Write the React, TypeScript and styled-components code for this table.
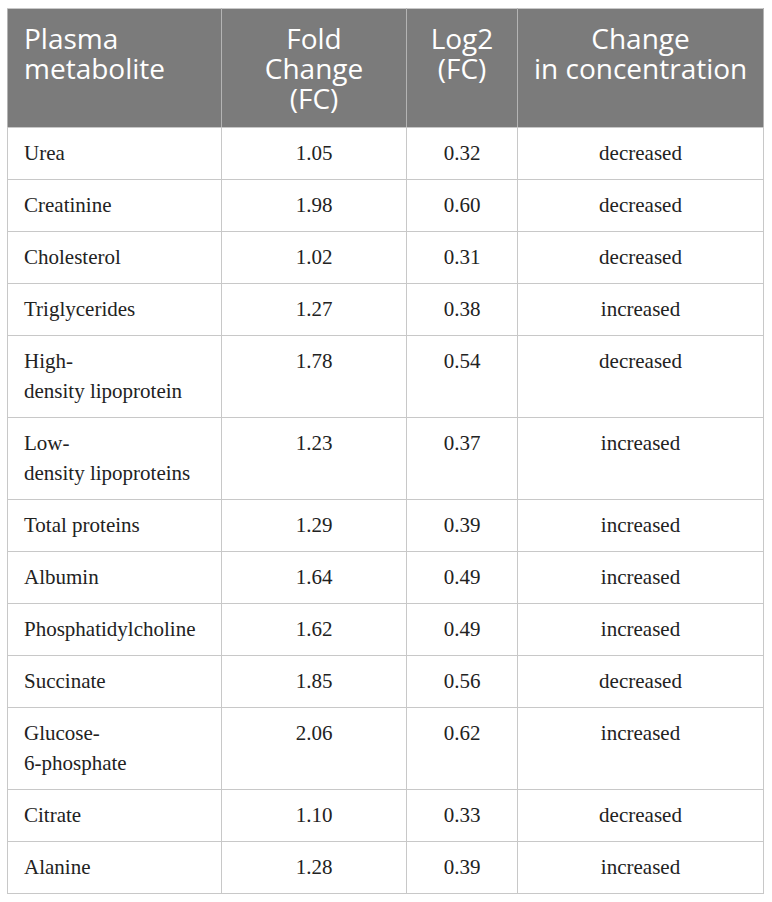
import React from 'react';
import styled, { createGlobalStyle } from 'styled-components';

const GlobalStyle = createGlobalStyle`
  body {
    margin: 0;
    background: #ffffff;
  }
`;

interface Row {
  name: string[];
  fc: string;
  log2: string;
  change: string;
}

const rows: Row[] = [
  { name: ['Urea'], fc: '1.05', log2: '0.32', change: 'decreased' },
  { name: ['Creatinine'], fc: '1.98', log2: '0.60', change: 'decreased' },
  { name: ['Cholesterol'], fc: '1.02', log2: '0.31', change: 'decreased' },
  { name: ['Triglycerides'], fc: '1.27', log2: '0.38', change: 'increased' },
  { name: ['High-', 'density lipoprotein'], fc: '1.78', log2: '0.54', change: 'decreased' },
  { name: ['Low-', 'density lipoproteins'], fc: '1.23', log2: '0.37', change: 'increased' },
  { name: ['Total proteins'], fc: '1.29', log2: '0.39', change: 'increased' },
  { name: ['Albumin'], fc: '1.64', log2: '0.49', change: 'increased' },
  { name: ['Phosphatidylcholine'], fc: '1.62', log2: '0.49', change: 'increased' },
  { name: ['Succinate'], fc: '1.85', log2: '0.56', change: 'decreased' },
  { name: ['Glucose-', '6-phosphate'], fc: '2.06', log2: '0.62', change: 'increased' },
  { name: ['Citrate'], fc: '1.10', log2: '0.33', change: 'decreased' },
  { name: ['Alanine'], fc: '1.28', log2: '0.39', change: 'increased' },
];

const Page = styled.div`
  padding: 8px 9px 9px 7px;
`;

const Table = styled.table`
  width: 756px;
  table-layout: fixed;
  border-collapse: collapse;
  border: 1px solid #c8c8c8;
`;

const HeadCell = styled.th<{ $align?: 'left' | 'center' }>`
  background: #7b7b7b;
  color: #ffffff;
  font-family: 'Open Sans', 'Noto Sans', sans-serif;
  font-weight: 400;
  font-size: 28px;
  line-height: 30px;
  padding: 14px 16px 14px 16px;
  text-align: ${p => p.$align ?? 'center'};
  vertical-align: top;
  border: 1px solid #b4b4b4;
  border-top-color: #c8c8c8;
  border-bottom-color: #c8c8c8;
`;

const Cell = styled.td<{ $align?: 'left' | 'center' }>`
  font-family: 'Liberation Serif', 'Times New Roman', serif;
  font-size: 21px;
  line-height: 30px;
  color: #222222;
  padding: 10px 16px 11px 16px;
  text-align: ${p => p.$align ?? 'center'};
  vertical-align: top;
  border: 1px solid #c8c8c8;
`;

const Line = styled.div`
  white-space: nowrap;
`;

export default function App() {
  return (
    <Page>
      <GlobalStyle />
      <Table>
        <colgroup>
          <col style={{ width: 214 }} />
          <col style={{ width: 185 }} />
          <col style={{ width: 111 }} />
          <col style={{ width: 246 }} />
        </colgroup>
        <thead>
          <tr>
            <HeadCell $align="left">
              <Line>Plasma</Line>
              <Line>metabolite</Line>
            </HeadCell>
            <HeadCell>
              <Line>Fold</Line>
              <Line>Change</Line>
              <Line>(FC)</Line>
            </HeadCell>
            <HeadCell>
              <Line>Log2</Line>
              <Line>(FC)</Line>
            </HeadCell>
            <HeadCell>
              <Line>Change</Line>
              <Line>in concentration</Line>
            </HeadCell>
          </tr>
        </thead>
        <tbody>
          {rows.map(r => (
            <tr key={r.name.join('')}>
              <Cell $align="left">
                {r.name.map(n => (
                  <Line key={n}>{n}</Line>
                ))}
              </Cell>
              <Cell>{r.fc}</Cell>
              <Cell>{r.log2}</Cell>
              <Cell>{r.change}</Cell>
            </tr>
          ))}
        </tbody>
      </Table>
    </Page>
  );
}
